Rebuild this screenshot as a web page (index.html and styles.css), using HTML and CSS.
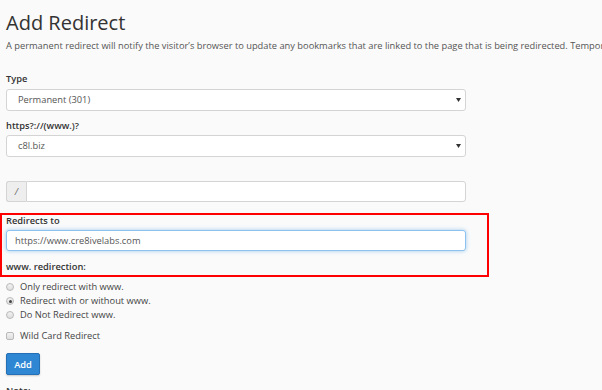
FILE: index.html
```html
<!DOCTYPE html>
<html lang="en">
<head>
    <meta charset="UTF-8">
    <title>Add Redirect</title>
    <link rel="stylesheet" href="styles.css">
</head>
<body>
    <div class="page">
        <h1>Add Redirect</h1>
        <p class="intro">A permanent redirect will notify the visitor’s browser to update any bookmarks that are linked to the page that is being redirected. Temporary redirects will not update the visitor’s bookmarks.</p>

        <div class="form-group first">
            <label class="label">Type</label>
            <div class="select">
                <span>Permanent (301)</span>
                <svg class="caret" width="5" height="4" viewBox="0 0 5 4"><path d="M0 0H5L2.5 4Z" fill="#333"/></svg>
            </div>
        </div>

        <div class="form-group">
            <label class="label">https?://(www.)?</label>
            <div class="select">
                <span>c8l.biz</span>
                <svg class="caret" width="5" height="4" viewBox="0 0 5 4"><path d="M0 0H5L2.5 4Z" fill="#333"/></svg>
            </div>
        </div>

        <div class="form-group path">
            <div class="input-group">
                <span class="addon">/</span>
                <div class="input"></div>
            </div>
        </div>

        <div class="form-group target">
            <label class="label">Redirects to</label>
            <div class="input focus">https://www.cre8ivelabs.com</div>
        </div>

        <label class="label">www. redirection:</label>
        <div class="options">
            <div class="option"><span class="radio"></span>Only redirect with www.</div>
            <div class="option"><span class="radio checked"></span>Redirect with or without www.</div>
            <div class="option"><span class="radio"></span>Do Not Redirect www.</div>
        </div>

        <div class="option wildcard"><span class="checkbox"></span>Wild Card Redirect</div>

        <button class="button">Add</button>

        <div class="note">Note:</div>

        <div class="highlight"></div>
    </div>
</body>
</html>
```

FILE: styles.css
```css
* {
    margin: 0;
    padding: 0;
    box-sizing: border-box;
}

body {
    background: #fafafa;
    color: #333333;
    font-family: "Open Sans", "Liberation Sans", sans-serif;
    font-size: 9.3px;
    line-height: 13.3px;
    overflow: hidden;
}

.page {
    position: relative;
    padding: 12px 0 0 6px;
    height: 390px;
}

h1 {
    font-size: 20px;
    font-weight: 400;
    line-height: 22px;
    color: #333333;
}

.intro {
    margin-top: 5px;
    white-space: nowrap;
    color: #555555;
}

.form-group {
    width: 460px;
    margin-bottom: 8px;
}

.form-group.first {
    margin-top: 20px;
}

.form-group.path {
    margin-top: 24px;
    margin-bottom: 12px;
}

.form-group.target {
    margin-bottom: 9px;
}

.label {
    display: block;
    font-weight: 600;
    margin-bottom: 3px;
}

.select {
    height: 22px;
    background: #ffffff;
    border: 1px solid #d4d4d4;
    border-radius: 3px;
    padding: 0 4px 0 11px;
    display: flex;
    align-items: center;
    justify-content: space-between;
    color: #555555;
}

.caret {
    display: block;
}

.input-group {
    display: flex;
    height: 21px;
}

.addon {
    width: 20px;
    background: #eeeeee;
    border: 1px solid #d4d4d4;
    border-right: none;
    border-radius: 3px 0 0 3px;
    color: #666666;
    display: flex;
    align-items: center;
    justify-content: center;
    font-style: italic;
}

.input {
    flex: 1;
    height: 21px;
    background: #ffffff;
    border: 1px solid #d4d4d4;
    border-radius: 3px;
    padding: 0 8px;
    display: flex;
    align-items: center;
    color: #555555;
}

.input-group .input {
    border-radius: 0 3px 3px 0;
}

.input.focus {
    margin-top: 1px;
    border-color: #8ec2ee;
    box-shadow: 0 0 4px rgba(102, 175, 233, 0.6);
}

.options {
    margin-top: 7px;
}

.option {
    display: flex;
    align-items: center;
    line-height: 14px;
    color: #444444;
}

.radio {
    width: 8px;
    height: 8px;
    border-radius: 50%;
    border: 1px solid #b9b9b9;
    background: linear-gradient(#f2f2f2, #dedede);
    margin-right: 6px;
    position: relative;
}

.radio.checked:after {
    content: "";
    position: absolute;
    left: 1.5px;
    top: 1.5px;
    width: 3px;
    height: 3px;
    border-radius: 50%;
    background: #444444;
}

.wildcard {
    margin-top: 7px;
}

.checkbox {
    width: 8px;
    height: 8px;
    border: 1px solid #b9b9b9;
    border-radius: 2px;
    background: linear-gradient(#f2f2f2, #dedede);
    margin-right: 6px;
}

.button {
    display: block;
    margin-top: 10px;
    width: 34px;
    height: 22px;
    background: #2f87d4;
    border: 1px solid #2570b5;
    border-radius: 2px;
    color: #ffffff;
    font-family: inherit;
    font-size: 9.3px;
    font-weight: 600;
    box-shadow: 0 1px 2px rgba(0, 0, 0, 0.2);
}

.note {
    margin-top: 9px;
    font-weight: 600;
}

.highlight {
    position: absolute;
    left: 0;
    top: 213px;
    width: 489px;
    height: 64px;
    border: 2px solid #ff0000;
}
```
